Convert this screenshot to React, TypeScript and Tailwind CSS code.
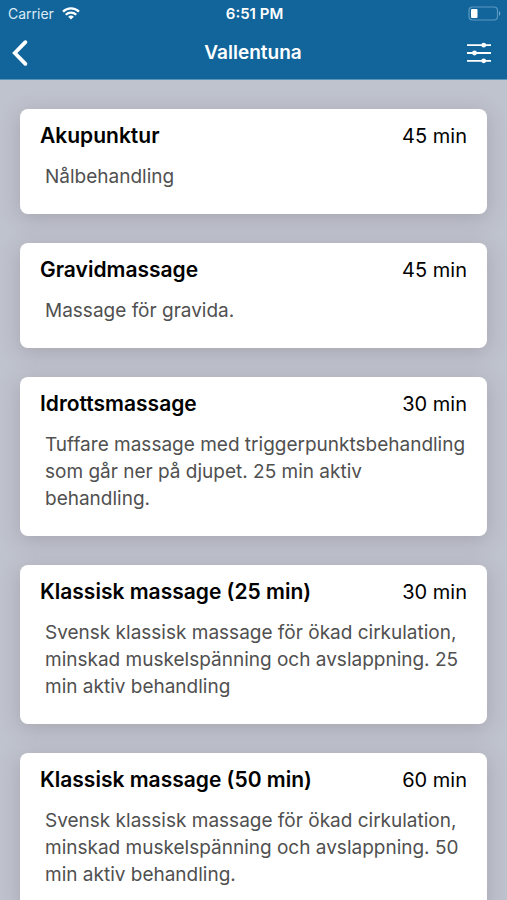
interface Treatment {
  id: number;
  name: string;
  duration: number;
  description: string;
}

const treatments: Treatment[] = [
  { id: 1, name: "Akupunktur", duration: 45, description: "Nålbehandling" },
  { id: 2, name: "Gravidmassage", duration: 45, description: "Massage för gravida." },
  {
    id: 3,
    name: "Idrottsmassage",
    duration: 30,
    description: "Tuffare massage med triggerpunktsbehandling som går ner på djupet. 25 min aktiv behandling.",
  },
  {
    id: 4,
    name: "Klassisk massage (25 min)",
    duration: 30,
    description: "Svensk klassisk massage för ökad cirkulation, minskad muskelspänning och avslappning. 25 min aktiv behandling",
  },
  {
    id: 5,
    name: "Klassisk massage (50 min)",
    duration: 60,
    description: "Svensk klassisk massage för ökad cirkulation, minskad muskelspänning och avslappning. 50 min aktiv behandling.",
  },
];

function WifiIcon() {
  return (
    <svg width="18" height="13" viewBox="0 0 18 13" fill="none" stroke="#fff" strokeWidth="2.3" aria-hidden="true">
      <path d="M1 4.6a11.4 11.4 0 0 1 16 0" />
      <path d="M3.8 7.7a7.4 7.4 0 0 1 10.4 0" />
      <path d="M9 12.6 6.2 9.8a3.9 3.9 0 0 1 5.6 0z" fill="#fff" stroke="none" />
    </svg>
  );
}

function BatteryIcon() {
  return (
    <svg width="33" height="15" viewBox="0 0 33 15" aria-hidden="true">
      <rect x="1" y="1" width="28.5" height="13" rx="3.5" fill="none" stroke="#5b98c0" strokeWidth="1.2" />
      <rect x="3" y="3" width="6.5" height="9" rx="1" fill="#fff" />
      <path d="M31 5.2c1.8.6 1.8 4 0 4.6z" fill="#6ba3c8" />
    </svg>
  );
}

function BackIcon() {
  return (
    <svg width="18" height="28" viewBox="0 0 18 28" fill="none" stroke="currentColor" strokeWidth="3.8" strokeLinecap="round" strokeLinejoin="miter" aria-hidden="true">
      <path d="M14.4 3.2 3.8 14l10.6 10.8" />
    </svg>
  );
}

function FilterIcon() {
  return (
    <svg width="24" height="22" viewBox="0 0 24 22" fill="currentColor" aria-hidden="true">
      <path d="M0 2.3h24v1.8H0zM0 10.1h24v1.8H0zM0 17.9h24v1.8H0z" />
      <circle cx="16.7" cy="3.2" r="2.4" />
      <circle cx="7.5" cy="11" r="2.4" />
      <circle cx="16.7" cy="18.8" r="2.4" />
    </svg>
  );
}

function TreatmentCard({ treatment }: { treatment: Treatment }) {
  return (
    <li className="rounded-lg bg-white pt-[13px] pb-6 shadow-[0_4px_20px_rgba(90,75,85,0.25)]">
      <div className="flex items-center justify-between px-5 leading-7 text-black">
        <h2 className="text-[21px] font-semibold">{treatment.name}</h2>
        <span className="text-[20px]">{treatment.duration} min</span>
      </div>
      <p className="mt-[13px] pr-4 pl-[25px] text-[19px] leading-[27px] text-[#505050]">{treatment.description}</p>
    </li>
  );
}

export default function App() {
  return (
    <div className="h-screen overflow-hidden bg-[#bfc3ce] font-['Inter',sans-serif]">
      <header className="border-b border-[#5b94b8] bg-[#11659b] text-white">
        {/* Status bar */}
        <div className="flex h-[27px] items-center pr-[6px] pl-2 text-[14px] leading-5">
          <div className="flex flex-1 items-center gap-2 text-[#dcebf5]">
            <span>Carrier</span>
            <WifiIcon />
          </div>
          <span className="text-center text-[15px] font-semibold">6:51 PM</span>
          <div className="flex flex-1 justify-end">
            <BatteryIcon />
          </div>
        </div>

        {/* Navigation bar */}
        <div className="flex h-[52px] items-center pr-4 pl-[11px]">
          <div className="flex flex-1">
            <button type="button" aria-label="Tillbaka">
              <BackIcon />
            </button>
          </div>
          <h1 className="pl-1 text-center text-[19px] leading-6 font-semibold">Vallentuna</h1>
          <div className="flex flex-1 justify-end">
            <button type="button" aria-label="Filter">
              <FilterIcon />
            </button>
          </div>
        </div>
      </header>

      <main className="px-5 pt-[29px]">
        <ul className="flex flex-col gap-[29px]">
          {treatments.map((treatment) => (
            <TreatmentCard key={treatment.id} treatment={treatment} />
          ))}
        </ul>
      </main>
    </div>
  );
}
